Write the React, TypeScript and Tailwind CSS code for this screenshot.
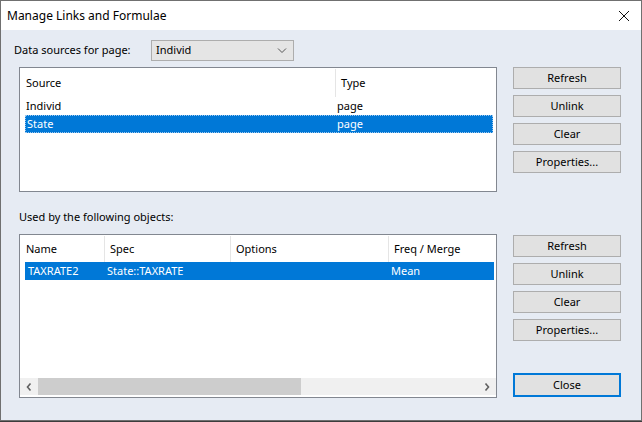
import React from 'react';

const font = { fontFamily: '"Noto Sans", "Open Sans", sans-serif' };

const DlgButton: React.FC<{ label: string; primary?: boolean }> = ({ label, primary }) => (
  <div
    className={
      'h-[22px] w-[108px] flex items-center justify-center bg-[#e1e1e1] text-black ' +
      (primary ? 'border-2 border-[#0078d7] h-[24px]' : 'border border-[#adadad]')
    }
  >
    {label}
  </div>
);

const HeaderCell: React.FC<{ label: string; w: string; divider?: boolean }> = ({ label, w, divider }) => (
  <div className={'h-full flex items-center shrink-0 ' + w + (divider ? ' border-l border-[#e5e5e5] pl-[5px]' : ' pl-[6px]')}>
    {label}
  </div>
);

export default function App() {
  return (
    <div style={font} className="w-[642px] h-[422px] bg-[#3c3c3c] text-[11px] text-black overflow-hidden">
      <div className="w-[642px] h-[421px] border border-[#707070] bg-[#e6ebf3] flex flex-col">
        {/* Title bar */}
        <div className="h-[29px] bg-white flex items-center justify-between pl-[6px] pr-[10px] shrink-0">
          <span className="text-[12px] leading-none">Manage Links and Formulae</span>
          <svg width="12" height="12" viewBox="0 0 12 12" className="mr-[1px]">
            <path d="M1 1 L11 11 M11 1 L1 11" stroke="#111" strokeWidth="1" />
          </svg>
        </div>

        {/* Data sources row */}
        <div className="flex items-center mt-[10px] h-[21px] pl-[13px]">
          <span className="w-[137px]">Data sources for page:</span>
          <div className="w-[143px] h-[21px] border border-[#adadad] bg-[#e5e5e5] flex items-center justify-between pl-[4px] pr-[6px]">
            <span>Individ</span>
            <svg width="10" height="6" viewBox="0 0 10 6">
              <path d="M1 0.5 L5 4.5 L9 0.5" stroke="#555" strokeWidth="1" fill="none" />
            </svg>
          </div>
        </div>

        {/* Sources list + buttons */}
        <div className="flex mt-[6px] pl-[18px]">
          <div className="w-[478px] h-[125px] border border-[#828790] bg-white flex flex-col pt-px">
            <div className="h-[28px] flex items-center">
              <HeaderCell label="Source" w="w-[315px]" />
              <HeaderCell label="Type" w="w-[100px]" divider />
            </div>
            <div className="h-[18px] flex items-center">
              <span className="w-[317px] pl-[6px] shrink-0">Individ</span>
              <span>page</span>
            </div>
            <div className="h-[18px] ml-[5px] w-[468px] bg-[#0078d7] text-white flex items-center border border-dotted border-[#9cc7ee]">
              <span className="w-[311px] pl-px shrink-0">State</span>
              <span>page</span>
            </div>
          </div>
          <div className="ml-[16px] flex flex-col gap-[6px]">
            <DlgButton label="Refresh" />
            <DlgButton label="Unlink" />
            <DlgButton label="Clear" />
            <DlgButton label="Properties..." />
          </div>
        </div>

        {/* Objects label */}
        <div className="mt-[17px] pl-[18px] h-[17px] flex items-center">Used by the following objects:</div>

        {/* Objects list + buttons */}
        <div className="flex mt-[8px] pl-[18px]">
          <div className="w-[478px] h-[164px] border border-[#828790] bg-white flex flex-col pt-px">
            <div className="h-[26px] flex items-center overflow-hidden">
              <HeaderCell label="Name" w="w-[84px]" />
              <HeaderCell label="Spec" w="w-[126px]" divider />
              <HeaderCell label="Options" w="w-[158px]" divider />
              <HeaderCell label="Freq / Merge" w="w-[108px]" divider />
            </div>
            <div className="h-[18px] ml-[5px] w-[469px] bg-[#0078d7] text-white flex items-center">
              <span className="w-[78px] pl-[3px] shrink-0">TAXRATE2</span>
              <span className="w-[285px] pl-[4px] shrink-0">State::TAXRATE</span>
              <span className="pl-[3px]">Mean</span>
            </div>
            <div className="flex-1" />
            <div className="h-[17px] mb-[2px] flex items-center bg-[#f0f0f0]">
              <div className="w-[18px] flex justify-center">
                <svg width="6" height="8" viewBox="0 0 6 8">
                  <path d="M4.5 0.5 L1.5 4 L4.5 7.5" stroke="#606060" strokeWidth="1.6" fill="none" />
                </svg>
              </div>
              <div className="w-[263px] h-full bg-[#cdcdcd]" />
              <div className="flex-1" />
              <div className="w-[18px] flex justify-center">
                <svg width="6" height="8" viewBox="0 0 6 8">
                  <path d="M1.5 0.5 L4.5 4 L1.5 7.5" stroke="#606060" strokeWidth="1.6" fill="none" />
                </svg>
              </div>
            </div>
          </div>
          <div className="ml-[16px] flex flex-col gap-[6px] pt-px">
            <DlgButton label="Refresh" />
            <DlgButton label="Unlink" />
            <DlgButton label="Clear" />
            <DlgButton label="Properties..." />
            <div className="mt-auto mb-[1px]">
              <DlgButton label="Close" primary />
            </div>
          </div>
        </div>
      </div>
    </div>
  );
}
